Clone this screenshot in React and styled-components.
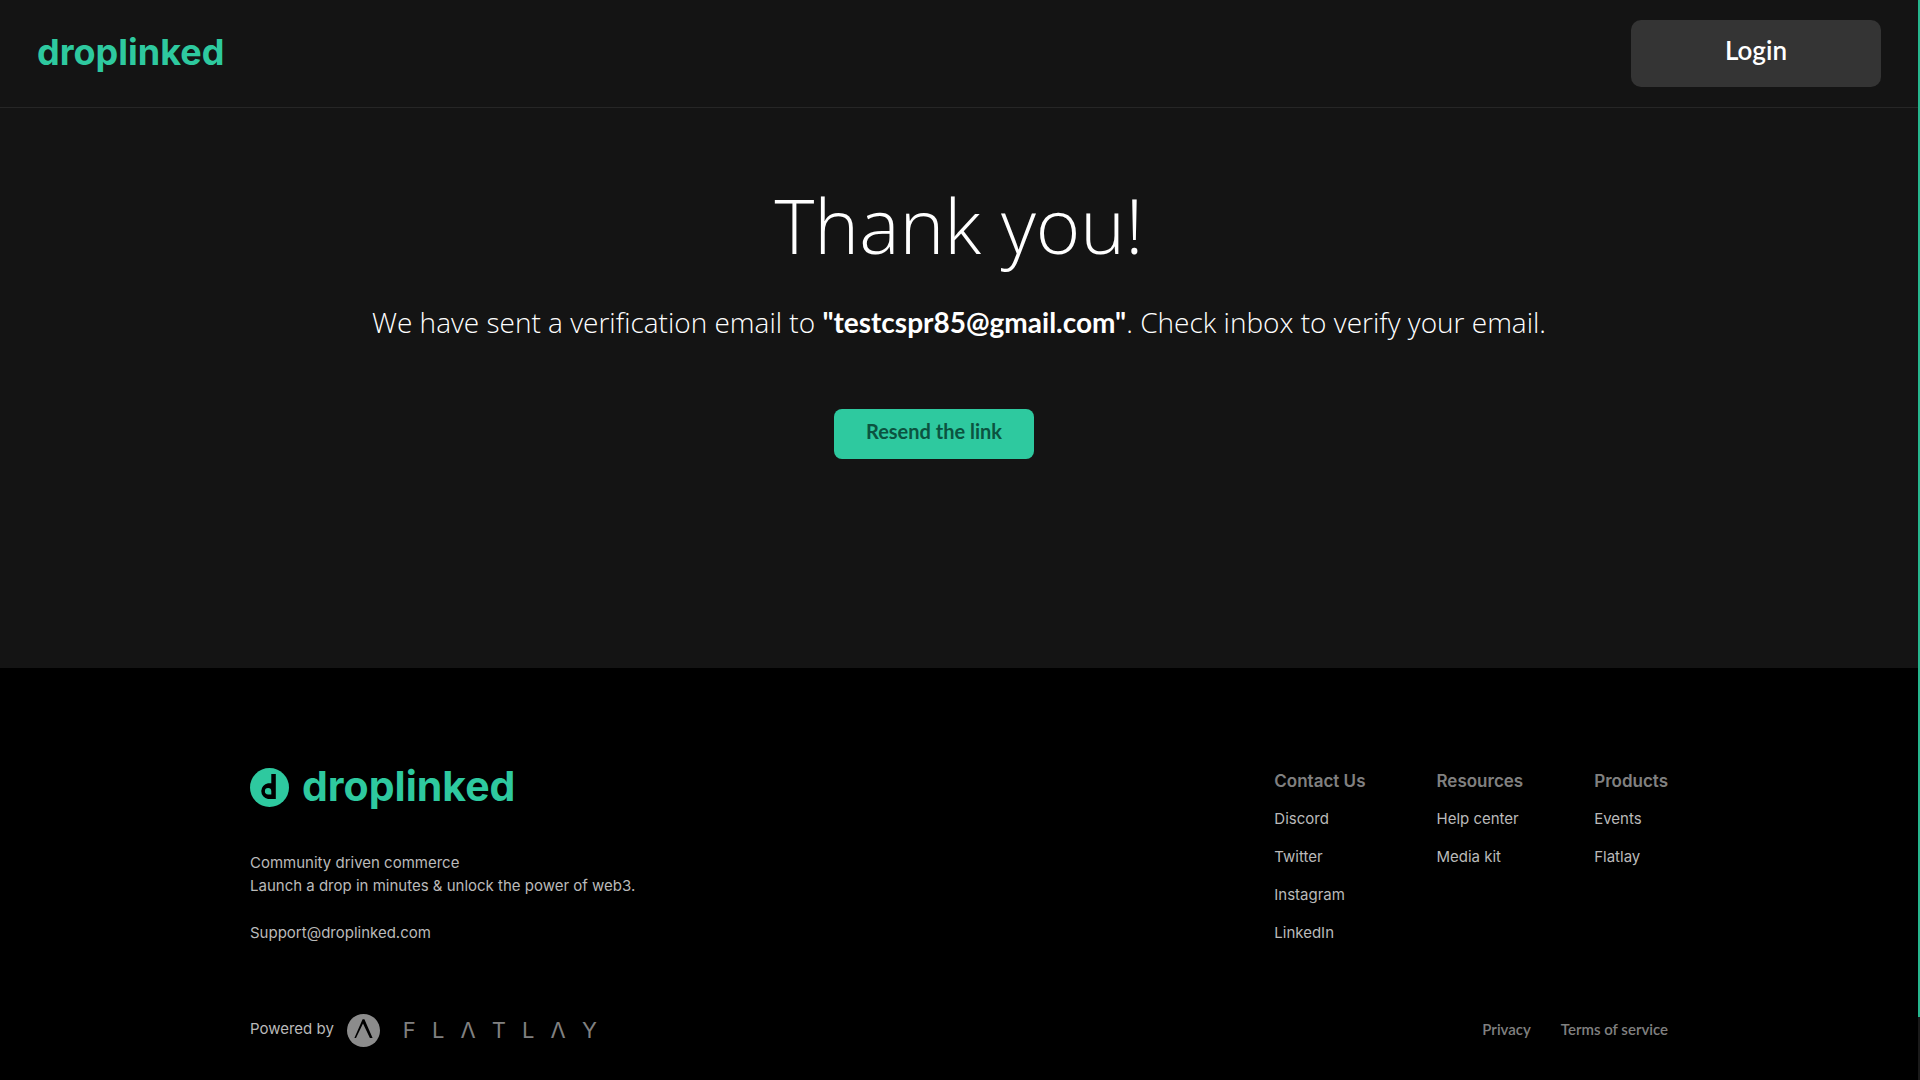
import React from "react";
import styled, { createGlobalStyle, ThemeProvider } from "styled-components";

const theme = {
  green: "#2ec99f",
  greenDark: "#0b5340",
  surface: "#141414",
  raised: "#343434",
  line: "#262626",
  muted: "#808080",
  soft: "#bababa",
  light: `"Open Sans", Lato, sans-serif`,
  display: `Lato, "Open Sans", sans-serif`,
  body: `Inter, "Open Sans", sans-serif`,
};

const GlobalStyle = createGlobalStyle`
  *, *::before, *::after { box-sizing: border-box; }
  body {
    margin: 0;
    background: #000;
    color: #fff;
    font-family: ${theme.display};
  }
  h1, h2, p, ul { margin: 0; padding: 0; }
  ul { list-style: none; }
  a { color: inherit; text-decoration: none; }
  button { border: 0; cursor: pointer; font-family: inherit; }
`;

const Page = styled.div`
  display: flex;
  flex-direction: column;
  min-height: 100vh;
  padding-right: 2px;
`;

const ScrollTrack = styled.div`
  position: fixed;
  top: 0;
  right: 0;
  bottom: 0;
  width: 2px;
  background: #1a1a1a;
`;

const ScrollThumb = styled.div`
  height: 94.2%;
  background: #27b68e;
`;

const Header = styled.header`
  display: flex;
  align-items: center;
  justify-content: space-between;
  padding: 20px 37px;
  background: ${(p) => p.theme.surface};
  border-bottom: 1px solid ${(p) => p.theme.line};
`;

const Wordmark = styled.a`
  padding-bottom: 4px;
  color: ${(p) => p.theme.green};
  font-family: ${(p) => p.theme.body};
  font-size: ${(p) => (p.$large ? 41 : 36)}px;
  font-weight: 700;
  line-height: 40px;
`;

const Button = styled.button`
  display: flex;
  align-items: center;
  justify-content: center;
  padding-bottom: 8px;
`;

const LoginButton = styled(Button)`
  width: 250px;
  height: 67px;
  border-radius: 10px;
  background: ${(p) => p.theme.raised};
  color: #fff;
  font-size: 26px;
  font-weight: 600;
`;

const ResendButton = styled(Button)`
  width: 200px;
  height: 50px;
  margin: 69px 50px 0 0;
  border-radius: 8px;
  background: ${(p) => p.theme.green};
  color: ${(p) => p.theme.greenDark};
  font-size: 20px;
  font-weight: 700;
`;

const Main = styled.main`
  display: flex;
  flex-direction: column;
  align-items: center;
  padding: 70px 40px 209px;
  background: ${(p) => p.theme.surface};
`;

const Title = styled.h1`
  font-family: ${(p) => p.theme.light};
  font-size: 76px;
  font-weight: 300;
  line-height: 94px;
`;

const Message = styled.p`
  margin-top: 32px;
  font-family: ${(p) => p.theme.light};
  font-size: 28px;
  font-weight: 300;
  line-height: 36px;
  text-align: center;
`;

const Email = styled.strong`
  font-family: ${(p) => p.theme.display};
  font-weight: 700;
`;

const Footer = styled.footer`
  flex: 1;
  padding: 100px 250px 33px;
  background: #000;
  color: ${(p) => p.theme.soft};
  font-family: ${(p) => p.theme.body};
  font-size: 15px;
  line-height: 23px;
`;

const FooterRow = styled.div`
  display: flex;
  align-items: ${(p) => p.$align};
  justify-content: space-between;
`;

const BottomRow = styled(FooterRow)`
  margin-top: 70px;
`;

const Brand = styled.div`
  display: flex;
  align-items: center;
  gap: 13px;
  height: 39px;
  margin-bottom: 44px;
`;

const SupportLink = styled.a`
  display: inline-block;
  margin-top: 24px;
`;

const Columns = styled.nav`
  display: flex;
  gap: 71px;
`;

const ColumnTitle = styled.h2`
  color: ${(p) => p.theme.muted};
  font-size: 17px;
  font-weight: 600;
  line-height: 26px;
`;

const LinkList = styled.ul`
  display: flex;
  flex-direction: column;
  gap: 15px;
  margin-top: 13px;
`;

const Powered = styled.div`
  display: flex;
  align-items: center;
  gap: 13px;
`;

const PoweredLabel = styled.span`
  padding-bottom: 4px;
`;

const FlatlayLink = styled.a`
  display: flex;
  align-items: center;
  gap: 23px;
`;

const FlatlayName = styled.span`
  display: flex;
  justify-content: space-between;
  width: 194px;
  color: ${(p) => p.theme.muted};
  font-size: 22px;
  font-weight: 400;
`;

const Legal = styled.nav`
  display: flex;
  gap: 30px;
  padding-bottom: 2px;
  color: ${(p) => p.theme.muted};
  font-family: ${(p) => p.theme.display};
  font-weight: 600;
`;

const columns = [
  { title: "Contact Us", links: ["Discord", "Twitter", "Instagram", "LinkedIn"] },
  { title: "Resources", links: ["Help center", "Media kit"] },
  { title: "Products", links: ["Events", "Flatlay"] },
];

function DropMark() {
  return (
    <svg width="39" height="39" viewBox="0 0 39 39" aria-hidden="true">
      <circle cx="19.5" cy="19.5" r="19.5" fill={theme.green} />
      <path
        fill="#000"
        fillRule="evenodd"
        d="M21.3 6H25.8V31H18A8 8 0 0 1 18 15.2H21.3ZM21.3 26.5V23.2A3.2 3.2 0 1 0 18.1 26.5Z"
      />
    </svg>
  );
}

function FlatlayMark() {
  return (
    <svg width="33" height="33" viewBox="0 0 33 33" aria-hidden="true">
      <circle cx="16.5" cy="16.5" r="16.5" fill="#8c8c8c" />
      <path fill="#000" d="M15.6 5.2H17.4L25.6 24H22.9L16 9.6L9 24H7.4Z" />
    </svg>
  );
}

export default function App() {
  return (
    <ThemeProvider theme={theme}>
      <GlobalStyle />
      <Page>
        <Header>
          <Wordmark href="#home">droplinked</Wordmark>
          <LoginButton type="button">Login</LoginButton>
        </Header>
        <Main>
          <Title>Thank you!</Title>
          <Message>
            We have sent a verification email to <Email>"testcspr85@gmail.com"</Email>. Check inbox to
            verify your email.
          </Message>
          <ResendButton type="button">Resend the link</ResendButton>
        </Main>
        <Footer>
          <FooterRow $align="flex-start">
            <div>
              <Brand>
                <DropMark />
                <Wordmark href="#home" $large>droplinked</Wordmark>
              </Brand>
              <p>Community driven commerce</p>
              <p>Launch a drop in minutes &amp; unlock the power of web3.</p>
              <SupportLink href="mailto:Support@droplinked.com">Support@droplinked.com</SupportLink>
            </div>
            <Columns aria-label="Footer">
              {columns.map(({ title, links }) => (
                <section key={title}>
                  <ColumnTitle>{title}</ColumnTitle>
                  <LinkList>
                    {links.map((link) => (
                      <li key={link}>
                        <a href="#link">{link}</a>
                      </li>
                    ))}
                  </LinkList>
                </section>
              ))}
            </Columns>
          </FooterRow>
          <BottomRow $align="center">
            <Powered>
              <PoweredLabel>Powered by</PoweredLabel>
              <FlatlayLink href="#flatlay" aria-label="Flatlay">
                <FlatlayMark />
                <FlatlayName>
                  {[..."FLΛTLΛY"].map((letter, i) => (
                    <span key={i}>{letter}</span>
                  ))}
                </FlatlayName>
              </FlatlayLink>
            </Powered>
            <Legal aria-label="Legal">
              <a href="#privacy">Privacy</a>
              <a href="#terms">Terms of service</a>
            </Legal>
          </BottomRow>
        </Footer>
      </Page>
      <ScrollTrack aria-hidden="true">
        <ScrollThumb />
      </ScrollTrack>
    </ThemeProvider>
  );
}
